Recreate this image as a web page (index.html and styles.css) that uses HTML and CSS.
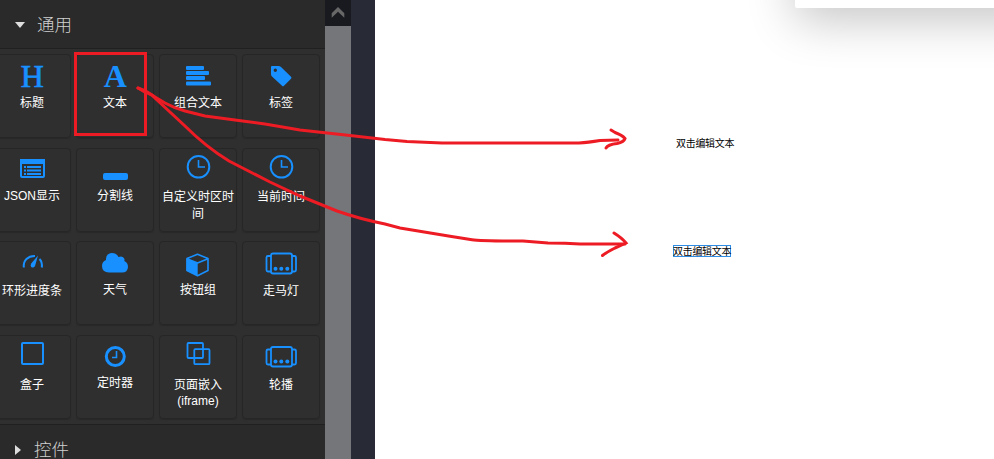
FILE: index.html
```html
<!DOCTYPE html>
<html lang="zh-CN">
<head>
<meta charset="utf-8">
<title>组件面板</title>
<link rel="stylesheet" href="styles.css">
</head>
<body>
<div class="app">
  <aside class="sidebar">
    <header class="section-head"><i class="caret caret-down"></i><span>通用</span></header>
    <div class="cards">
      <div class="card"><svg class="icon" viewBox="0 0 76 39"><text class="letter regular" transform="translate(38.300 32)">H</text></svg><span class="label">标题</span></div>
      <div class="card"><svg class="icon" viewBox="0 0 76 39"><text class="letter" transform="translate(38.300 32)">A</text></svg><span class="label">文本</span></div>
      <div class="card"><svg class="icon" viewBox="0 0 76 39"><g class="solid"><rect x="26" y="11" width="18" height="4" rx="1"/><rect x="26" y="16" width="23" height="4" rx="1"/><rect x="26" y="21" width="19" height="4" rx="1"/><rect x="26" y="26.500" width="25" height="4" rx="1"/></g></svg><span class="label">组合文本</span></div>
      <div class="card"><svg class="icon" viewBox="0 0 76 39"><path class="solid" fill-rule="evenodd" d="M28 12Q28 11 29 11H35.500Q37 11 38 12L48 21.700Q49 22.700 48 23.700L41 30.800Q40 31.800 39 30.800L29 21.500Q28 20.500 28 19ZM32.300 13.600A1.700 1.700 0 1 0 32.300 17A1.700 1.700 0 1 0 32.300 13.600Z"/></svg><span class="label">标签</span></div>

      <div class="card"><svg class="icon" viewBox="0 0 76 39"><rect class="line" x="27" y="11" width="23" height="17" rx="1"/><path class="solid" d="M26 10H51V15H26ZM30 17h2v2h-2zm3 0h14v2H33zM30 20.500h2v2h-2zm3 0h14v2H33zM30 24h2v2h-2zm3 0h14v2H33z"/></svg><span class="label up">JSON显示</span></div>
      <div class="card"><svg class="icon" viewBox="0 0 76 39"><rect class="solid" x="26" y="24" width="25" height="7" rx="2"/></svg><span class="label up">分割线</span></div>
      <div class="card"><svg class="icon" viewBox="0 0 76 39"><circle class="line" cx="38.500" cy="17.800" r="10.800"/><path class="line thin" d="M38.500 11V18H45"/></svg><span class="label">自定义时区时间</span></div>
      <div class="card"><svg class="icon" viewBox="0 0 76 39"><circle class="line" cx="38.500" cy="17.800" r="10.800"/><path class="line thin" d="M38.500 11V18H45"/></svg><span class="label">当前时间</span></div>

      <div class="card"><svg class="icon" viewBox="0 0 76 39"><path class="line" d="M29.800 25.500C29 18.500 34 13.800 41 14M45.500 17Q48.500 20 47.800 25.500"/><path class="solid" d="M44 13.500L41 24Q39.500 26.500 37.200 25Q36 23.500 37.200 21.500Z"/></svg><span class="label down">环形进度条</span></div>
      <div class="card"><svg class="icon" viewBox="0 0 76 39"><path class="solid" d="M32 30.500Q25 30 25 24Q25 19.500 29 18Q28.500 11.500 35 11Q39.500 11 41.500 15Q46 13.300 47.500 17Q47.600 18 47.300 19Q51 20.500 51 25Q50.700 30.500 45 30.500Z"/></svg><span class="label">天气</span></div>
      <div class="card"><svg class="icon" viewBox="0 0 76 39"><path class="line thin" stroke-linejoin="round" d="M37.500 12.300L48 16.500V28.500L37.500 33.700L27 28.500V16.500Z M27 16.800L37.500 21L48 16.800"/><path class="solid" d="M26.500 16.500L37.700 21V34L26.500 28.700Z"/></svg><span class="label">按钮组</span></div>
      <div class="card"><svg class="icon" viewBox="0 0 76 39"><g class="line mid"><rect x="28" y="11.500" width="21" height="20" rx="2"/><path d="M28 14H25Q23.500 14 23.500 15.500V28Q23.500 29.500 25 29.500H28M49 14H51.500Q53 14 53 15.500V28Q53 29.500 51.500 29.500H49"/></g><g class="solid"><circle cx="32.500" cy="26.800" r="2"/><circle cx="38.300" cy="26.800" r="2"/><circle cx="44.300" cy="26.800" r="2"/></g></svg><span class="label down">走马灯</span></div>

      <div class="card"><svg class="icon" viewBox="0 0 76 39"><rect class="line" x="28" y="7" width="21" height="21" rx="1"/></svg><span class="label down">盒子</span></div>
      <div class="card"><svg class="icon" viewBox="0 0 76 39"><circle class="line thick" cx="38.300" cy="20.500" r="9"/><path class="line thin" d="M39.500 15V21.500H35"/></svg><span class="label up">定时器</span></div>
      <div class="card"><svg class="icon" viewBox="0 0 76 39"><g class="line mid"><rect x="27.500" y="7" width="15.500" height="15" rx="1"/><rect x="34.300" y="13.200" width="15.200" height="15" rx="1"/></g></svg><span class="label down snug">页面嵌入<br>(iframe)</span></div>
      <div class="card"><svg class="icon" viewBox="0 0 76 39"><g class="line mid"><rect x="28" y="11" width="21" height="19.500" rx="2"/><path d="M28 13.500H25Q23.500 13.500 23.500 15V27Q23.500 28.500 25 28.500H28M49 13.500H51.500Q53 13.500 53 15V27Q53 28.500 51.500 28.500H49"/></g><g class="solid"><circle cx="32.500" cy="25.500" r="2"/><circle cx="38.300" cy="25.500" r="2"/><circle cx="44.300" cy="25.500" r="2"/></g></svg><span class="label down">轮播</span></div>
    </div>
    <header class="section-head closed"><i class="caret caret-right"></i><span>控件</span></header>
  </aside>
  <div class="scrollbar"><div class="scroll-up"><svg viewBox="0 0 26 26"><path d="M6.700 17.700V13.300L13 7L19.300 13.300V17.700L13 11.800Z"/></svg></div></div>
  <div class="gutter"></div>
  <main class="canvas">
    <div class="panel"></div>
    <div class="node first">双击编辑文本</div>
    <div class="node selected">双击编辑文本</div>
  </main>
  <svg class="marks" viewBox="0 0 994 459">
    <rect x="75.500" y="53.500" width="70" height="81"/>
    <path d="M138 88L145 92Q151 94 155 97L165 103Q174 108 185 111L205 116L235 120L265 124L300 130L350 135.500L385 139.500L407 141.500L442 143H579Q588 142.500 600 140.500L618 140"/>
    <path d="M611 130L615 132.500Q622 135 625 138.500Q624 142 617 143.500Q608 144.500 606 148"/>
    <path d="M138 88Q150 92 156 99L185 126Q206 147 229 161L270 182L300 196L337 211Q360 219 385 224L400 228L450 236.300L472 239.700Q480 241 523 241L548 243L565 243.200L580 244H625"/>
    <path d="M614 233Q622 238 626 243Q622 245 615 248Q607 252 602.500 255.500"/>
  </svg>
</div>
</body>
</html>
```
FILE: styles.css
```css
* { box-sizing: border-box; }

body {
  margin: 0;
  overflow: hidden;
  font-family: "Liberation Sans", "Noto Sans CJK SC", sans-serif;
}

.app {
  position: relative;
  display: flex;
  width: 994px;
  height: 459px;
  background: #fff;
}

.sidebar {
  width: 325px;
  height: 459px;
  overflow: hidden;
  background: #2f2f2f;
}

.section-head {
  display: flex;
  align-items: center;
  gap: 12px;
  height: 49px;
  padding: 2px 0 0 15px;
  border-bottom: 1px solid #202020;
  background: #2a2a2a;
  color: #d0d0d0;
  font-size: 17.5px;
  font-weight: 300;
  line-height: 24px;
}

.section-head.closed {
  height: 52px;
  gap: 13px;
  padding-top: 1px;
  border-top: 1px solid #202020;
}

.caret { border: 5px solid transparent; }

.caret-down {
  border-width: 6px 5px 0;
  border-top-color: #ddd;
}

.caret-right {
  border-width: 5px 0 5px 6px;
  border-left-color: #ddd;
}

.cards {
  display: grid;
  grid-template-columns: repeat(4, 78px);
  grid-auto-rows: 84px;
  gap: 9.67px 5px;
  margin-left: -7px;
  padding: 5px 0;
}

.card {
  display: flex;
  flex-direction: column;
  align-items: center;
  border: 1px solid #262626;
  border-radius: 4px;
  box-shadow: 0 1px 1px #292929;
}

.icon {
  flex: none;
  width: 76px;
  height: 39px;
}

.letter {
  fill: #1890ff;
  font: bold 32px "Liberation Serif", serif;
  text-anchor: middle;
}

.letter.regular {
  font-weight: 400;
  stroke: #1890ff;
  stroke-width: .7;
}

.solid { fill: #1890ff; }

.line {
  fill: none;
  stroke: #1890ff;
  stroke-width: 2;
}

.thin { stroke-width: 1.6; }
.mid { stroke-width: 1.8; }
.thick { stroke-width: 3; }

.label {
  margin-top: 1px;
  padding: 0 1px;
  color: #fff;
  font-size: 12px;
  line-height: 17px;
  text-align: center;
}

.up { margin-top: 0; }
.down { margin-top: 2px; }
.snug { line-height: 16px; }

.scrollbar {
  width: 26px;
  background: #75767a;
}

.scroll-up {
  height: 26px;
  background: #191a1f;
}

.scroll-up svg {
  display: block;
  width: 26px;
  height: 26px;
  fill: #686869;
}

.gutter {
  width: 24px;
  background: #282b35;
}

.canvas {
  position: relative;
  flex: 1;
  overflow: hidden;
}

.panel {
  position: absolute;
  top: -92px;
  left: 420px;
  width: 320px;
  height: 100px;
  border-radius: 2px;
  background: #fff;
  box-shadow: 0 12px 48px rgba(0, 0, 0, .23);
}

.node {
  position: absolute;
  color: #000;
  font-size: 10px;
  line-height: 10px;
  letter-spacing: -.3px;
  white-space: nowrap;
}

.first {
  top: 139px;
  left: 301px;
}

.selected {
  top: 245px;
  left: 298px;
  width: 58px;
  height: 12px;
  border: 1px solid #2f8de4;
  line-height: 12px;
  text-indent: -1px;
}

.marks {
  position: absolute;
  inset: 0;
  width: 994px;
  height: 459px;
  fill: none;
  stroke: #ed1c24;
  stroke-width: 3;
  stroke-linecap: round;
  pointer-events: none;
}
```
